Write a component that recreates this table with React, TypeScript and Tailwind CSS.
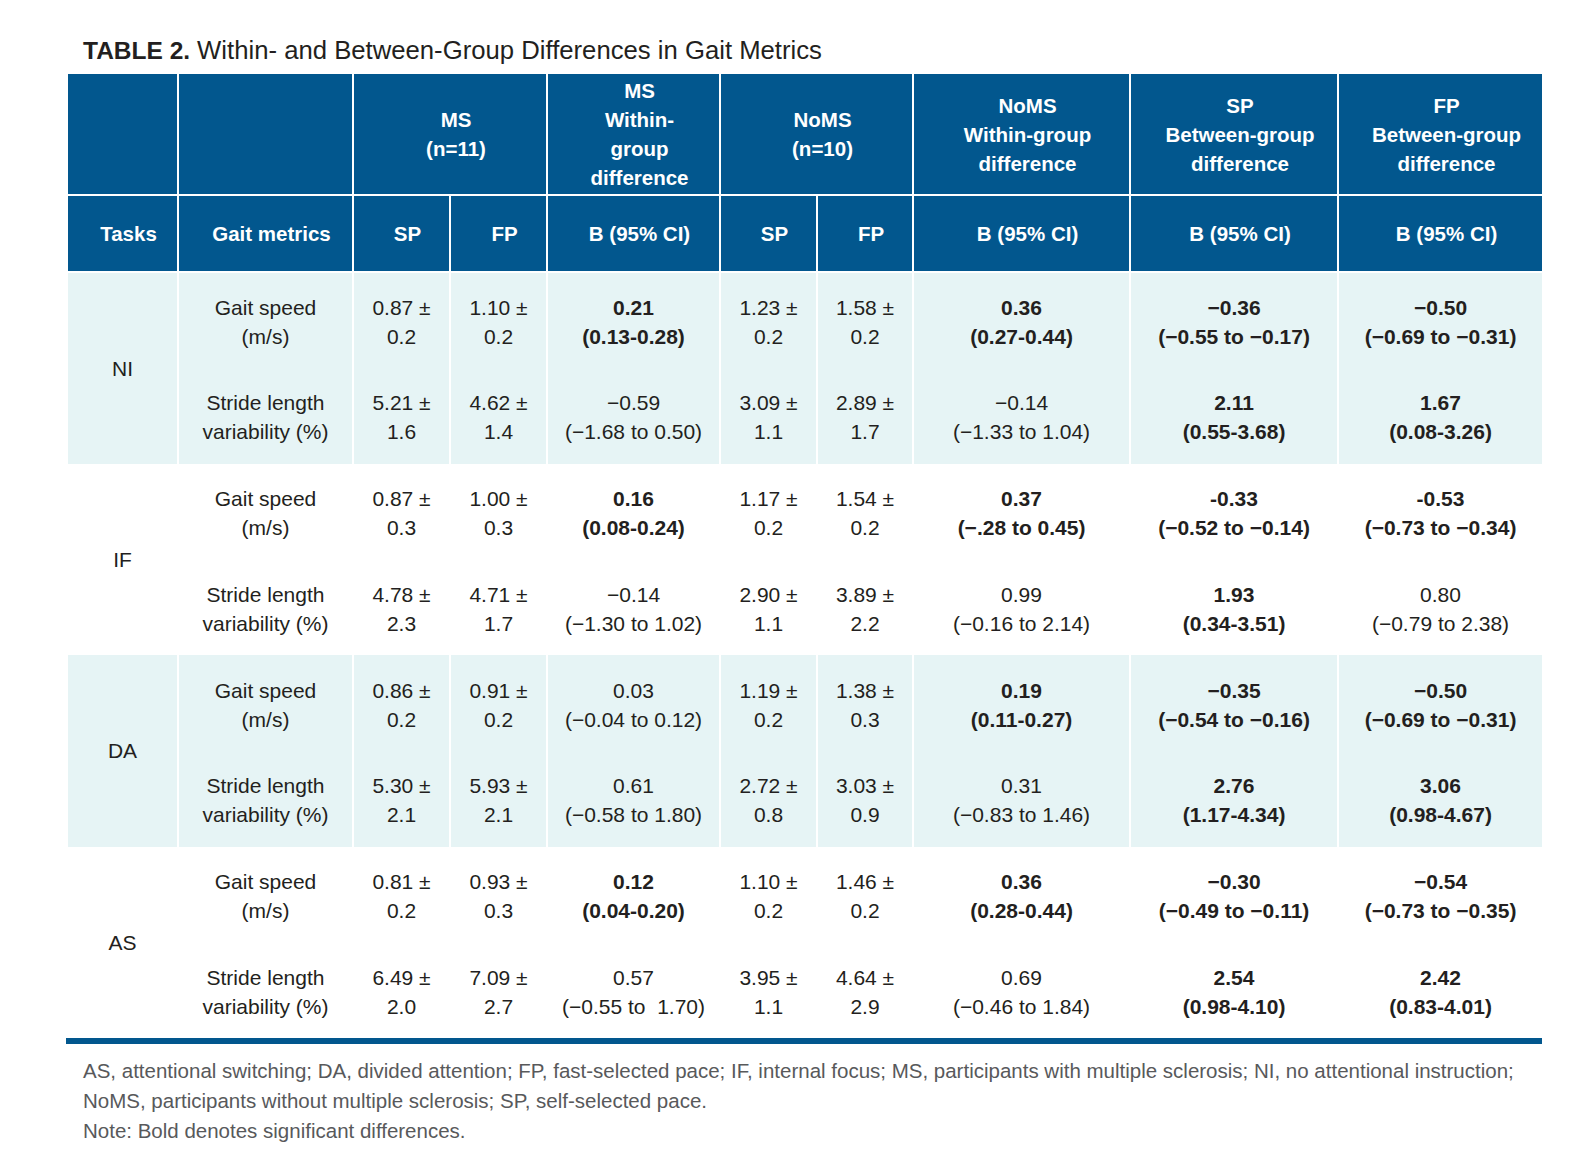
import React from 'react';

type Cell = { v: string; ci: string; bold?: boolean };

interface MetricRow {
  metric: [string, string];
  ms: [string, string];
  msFp: [string, string];
  msB: Cell;
  noSp: [string, string];
  noFp: [string, string];
  noB: Cell;
  spB: Cell;
  fpB: Cell;
}

interface TaskGroup {
  task: string;
  shaded: boolean;
  rows: [MetricRow, MetricRow];
}

const GAIT: [string, string] = ['Gait speed', '(m/s)'];
const STRIDE: [string, string] = ['Stride length', 'variability (%)'];

const groups: TaskGroup[] = [
  {
    task: 'NI',
    shaded: true,
    rows: [
      {
        metric: GAIT,
        ms: ['0.87 ±', '0.2'],
        msFp: ['1.10 ±', '0.2'],
        msB: { v: '0.21', ci: '(0.13-0.28)', bold: true },
        noSp: ['1.23 ±', '0.2'],
        noFp: ['1.58 ±', '0.2'],
        noB: { v: '0.36', ci: '(0.27-0.44)', bold: true },
        spB: { v: '−0.36', ci: '(−0.55 to −0.17)', bold: true },
        fpB: { v: '−0.50', ci: '(−0.69 to −0.31)', bold: true },
      },
      {
        metric: STRIDE,
        ms: ['5.21 ±', '1.6'],
        msFp: ['4.62 ±', '1.4'],
        msB: { v: '−0.59', ci: '(−1.68 to 0.50)' },
        noSp: ['3.09 ±', '1.1'],
        noFp: ['2.89 ±', '1.7'],
        noB: { v: '−0.14', ci: '(−1.33 to 1.04)' },
        spB: { v: '2.11', ci: '(0.55-3.68)', bold: true },
        fpB: { v: '1.67', ci: '(0.08-3.26)', bold: true },
      },
    ],
  },
  {
    task: 'IF',
    shaded: false,
    rows: [
      {
        metric: GAIT,
        ms: ['0.87 ±', '0.3'],
        msFp: ['1.00 ±', '0.3'],
        msB: { v: '0.16', ci: '(0.08-0.24)', bold: true },
        noSp: ['1.17 ±', '0.2'],
        noFp: ['1.54 ±', '0.2'],
        noB: { v: '0.37', ci: '(−.28 to 0.45)', bold: true },
        spB: { v: '-0.33', ci: '(−0.52 to −0.14)', bold: true },
        fpB: { v: '-0.53', ci: '(−0.73 to −0.34)', bold: true },
      },
      {
        metric: STRIDE,
        ms: ['4.78 ±', '2.3'],
        msFp: ['4.71 ±', '1.7'],
        msB: { v: '−0.14', ci: '(−1.30 to 1.02)' },
        noSp: ['2.90 ±', '1.1'],
        noFp: ['3.89 ±', '2.2'],
        noB: { v: '0.99', ci: '(−0.16 to 2.14)' },
        spB: { v: '1.93', ci: '(0.34-3.51)', bold: true },
        fpB: { v: '0.80', ci: '(−0.79 to 2.38)' },
      },
    ],
  },
  {
    task: 'DA',
    shaded: true,
    rows: [
      {
        metric: GAIT,
        ms: ['0.86 ±', '0.2'],
        msFp: ['0.91 ±', '0.2'],
        msB: { v: '0.03', ci: '(−0.04 to 0.12)' },
        noSp: ['1.19 ±', '0.2'],
        noFp: ['1.38 ±', '0.3'],
        noB: { v: '0.19', ci: '(0.11-0.27)', bold: true },
        spB: { v: '−0.35', ci: '(−0.54 to −0.16)', bold: true },
        fpB: { v: '−0.50', ci: '(−0.69 to −0.31)', bold: true },
      },
      {
        metric: STRIDE,
        ms: ['5.30 ±', '2.1'],
        msFp: ['5.93 ±', '2.1'],
        msB: { v: '0.61', ci: '(−0.58 to 1.80)' },
        noSp: ['2.72 ±', '0.8'],
        noFp: ['3.03 ±', '0.9'],
        noB: { v: '0.31', ci: '(−0.83 to 1.46)' },
        spB: { v: '2.76', ci: '(1.17-4.34)', bold: true },
        fpB: { v: '3.06', ci: '(0.98-4.67)', bold: true },
      },
    ],
  },
  {
    task: 'AS',
    shaded: false,
    rows: [
      {
        metric: GAIT,
        ms: ['0.81 ±', '0.2'],
        msFp: ['0.93 ±', '0.3'],
        msB: { v: '0.12', ci: '(0.04-0.20)', bold: true },
        noSp: ['1.10 ±', '0.2'],
        noFp: ['1.46 ±', '0.2'],
        noB: { v: '0.36', ci: '(0.28-0.44)', bold: true },
        spB: { v: '−0.30', ci: '(−0.49 to −0.11)', bold: true },
        fpB: { v: '−0.54', ci: '(−0.73 to −0.35)', bold: true },
      },
      {
        metric: STRIDE,
        ms: ['6.49 ±', '2.0'],
        msFp: ['7.09 ±', '2.7'],
        msB: { v: '0.57', ci: '(−0.55 to  1.70)' },
        noSp: ['3.95 ±', '1.1'],
        noFp: ['4.64 ±', '2.9'],
        noB: { v: '0.69', ci: '(−0.46 to 1.84)' },
        spB: { v: '2.54', ci: '(0.98-4.10)', bold: true },
        fpB: { v: '2.42', ci: '(0.83-4.01)', bold: true },
      },
    ],
  },
];

// header cells carry a little left padding, as in the print layout
const th = 'border-2 border-white bg-[#02578e] pl-[12px] text-center align-middle font-bold text-white';
const td = 'border-x-2 border-y-0 border-white text-center align-middle';

function Two({ lines }: { lines: [string, string] }) {
  return (
    <div className="pt-[3px]">
      <div>{lines[0]}</div>
      <div>{lines[1]}</div>
    </div>
  );
}

function Diff({ cell }: { cell: Cell }) {
  return (
    <div className={cell.bold ? 'pt-[3px] font-bold' : 'pt-[3px]'}>
      <div>{cell.v}</div>
      <div className="whitespace-pre">{cell.ci}</div>
    </div>
  );
}

export default function App() {
  return (
    <div className="min-h-[1172px] bg-white font-['Liberation_Sans',Arial,sans-serif] text-[#231f20]">
      <h1 className="pl-[83px] pt-[35px] text-[25.7px] leading-[30px]">
        <span className="text-[24.5px] font-bold">TABLE 2.</span>
        <span className="ml-[7px]">Within- and Between-Group Differences in Gait Metrics</span>
      </h1>

      <div className="ml-[66px] mt-[6px] w-[1476px]">
        <table className="w-[1476px] table-fixed border-collapse">
          <colgroup>
            <col className="w-[111px]" />
            <col className="w-[175px]" />
            <col className="w-[97px]" />
            <col className="w-[97px]" />
            <col className="w-[173px]" />
            <col className="w-[97px]" />
            <col className="w-[96px]" />
            <col className="w-[217px]" />
            <col className="w-[208px]" />
            <col className="w-[205px]" />
          </colgroup>
          <thead className="text-[20.5px] leading-[29px]">
            <tr className="h-[122px]">
              <th className={th} />
              <th className={th} />
              <th className={th} colSpan={2}>
                MS
                <br />
                (n=11)
              </th>
              <th className={th}>
                MS
                <br />
                Within-
                <br />
                group
                <br />
                difference
              </th>
              <th className={th} colSpan={2}>
                NoMS
                <br />
                (n=10)
              </th>
              <th className={th}>
                NoMS
                <br />
                Within-group
                <br />
                difference
              </th>
              <th className={th}>
                SP
                <br />
                Between-group
                <br />
                difference
              </th>
              <th className={th}>
                FP
                <br />
                Between-group
                <br />
                difference
              </th>
            </tr>
            <tr className="h-[77px]">
              <th className={th}>Tasks</th>
              <th className={th}>Gait metrics</th>
              <th className={th}>SP</th>
              <th className={th}>FP</th>
              <th className={th}>B (95% CI)</th>
              <th className={th}>SP</th>
              <th className={th}>FP</th>
              <th className={th}>B (95% CI)</th>
              <th className={th}>B (95% CI)</th>
              <th className={th}>B (95% CI)</th>
            </tr>
          </thead>
          <tbody className="text-[21px] leading-[29px]">
            {groups.map((g) =>
              g.rows.map((r, i) => (
                <tr
                  key={g.task + i}
                  className={
                    (g.shaded ? 'bg-[#e6f4f5] ' : 'bg-white ') + (i === 0 ? 'h-[96px]' : 'h-[95.5px]')
                  }
                >
                  {i === 0 && (
                    <td className={td} rowSpan={2}>
                      {g.task}
                    </td>
                  )}
                  <td className={td}>
                    <Two lines={r.metric} />
                  </td>
                  <td className={td}>
                    <Two lines={r.ms} />
                  </td>
                  <td className={td}>
                    <Two lines={r.msFp} />
                  </td>
                  <td className={td}>
                    <Diff cell={r.msB} />
                  </td>
                  <td className={td}>
                    <Two lines={r.noSp} />
                  </td>
                  <td className={td}>
                    <Two lines={r.noFp} />
                  </td>
                  <td className={td}>
                    <Diff cell={r.noB} />
                  </td>
                  <td className={td}>
                    <Diff cell={r.spB} />
                  </td>
                  <td className={td}>
                    <Diff cell={r.fpB} />
                  </td>
                </tr>
              ))
            )}
          </tbody>
        </table>
        <div className="h-[6px] w-[1476px] bg-[#02578e]" />
      </div>

      {/* footnotes */}
      <div className="mt-[12px] whitespace-nowrap pl-[83px] text-[20.5px] leading-[30px] text-[#58595b]">
        AS, attentional switching; DA, divided attention; FP, fast-selected pace; IF, internal focus; MS,
        participants with multiple sclerosis; NI, no attentional instruction;
        <br />
        NoMS, participants without multiple sclerosis; SP, self-selected pace.
        <br />
        Note: Bold denotes significant differences.
      </div>
    </div>
  );
}
